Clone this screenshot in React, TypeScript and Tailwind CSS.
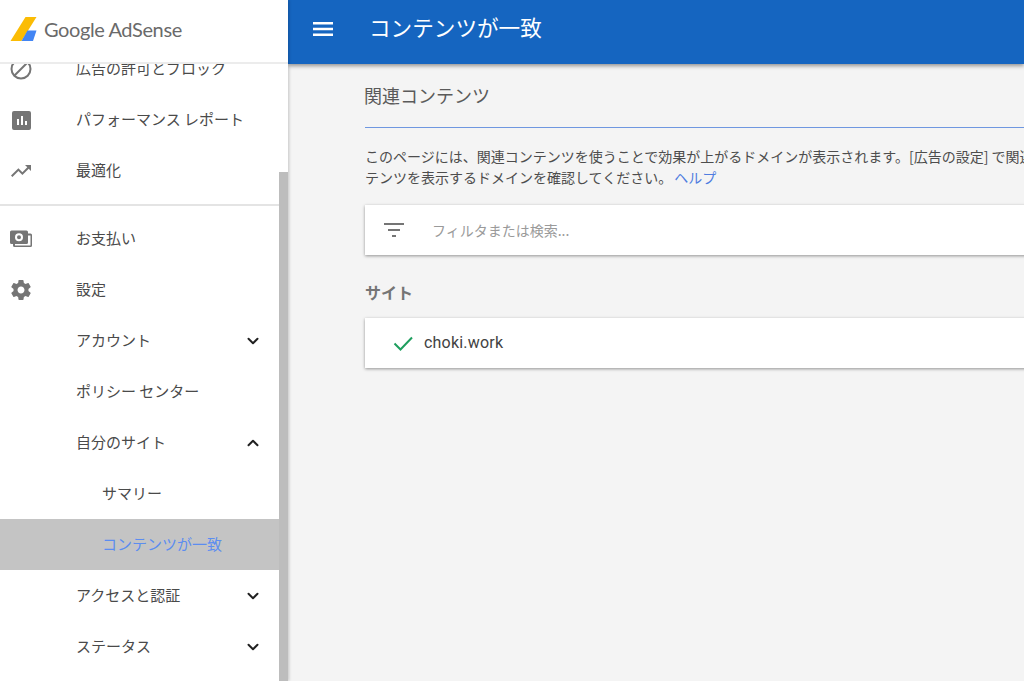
import { ChevronDown, ChevronUp } from 'lucide-react'
import type { ReactNode } from 'react'

const jp = { fontFamily: '"Noto Sans CJK JP", "Noto Sans", sans-serif' }

function AdSenseLogo() {
  return (
    <svg width="27" height="24" viewBox="0 0 27 24" className="shrink-0">
      <path d="M15.5 0H26.5L11.5 24H0.500Z" fill="#fbbc04" />
      <path d="M11.5 24L17.5 13.500H26.5L23 24Z" fill="#4285f4" />
    </svg>
  )
}

function BlockIcon() {
  return (
    <svg width="24" height="24" viewBox="0 0 24 24" fill="none" stroke="#757575" strokeWidth="2">
      <circle cx="12" cy="12" r="9.500" />
      <path d="M5.500 18.500L18.500 5.500" />
    </svg>
  )
}

function ChartIcon() {
  return (
    <svg width="24" height="24" viewBox="0 0 24 24" fill="#757575">
      <path d="M5 3h15a2 2 0 0 1 2 2v15a2 2 0 0 1-2 2H5a2 2 0 0 1-2-2V5a2 2 0 0 1 2-2zm3 14h2v-6H8zm4 0h2V8h-2zm4 0h2v-4h-2z" fillRule="evenodd" />
    </svg>
  )
}

function TrendIcon() {
  return (
    <svg width="24" height="24" viewBox="0 0 24 24" fill="#757575">
      <path d="M16 6l2.290 2.290-4.880 4.880-4-4L2 16.590 3.410 18l6-6 4 4 6.300-6.290L22 12V6z" />
    </svg>
  )
}

function MoneyIcon() {
  return (
    <svg width="24" height="24" viewBox="0 0 24 24" fill="#757575">
      <path d="M2.500 3.500h15a1.500 1.500 0 0 1 1.500 1.500v1.500h2.500A1.500 1.500 0 0 1 23 8v10.500a1.500 1.500 0 0 1-1.500 1.500h-16A1.500 1.500 0 0 1 4 18.500V17H2.500A1.500 1.500 0 0 1 1 15.500V5a1.500 1.500 0 0 1 1.500-1.500zM6 17v1.500h15.500V8.500H19v7a1.500 1.500 0 0 1-1.500 1.500zM10 6.200a4 4 0 1 0 0 8 4 4 0 0 0 0-8zm0 2a2 2 0 1 1 0 4 2 2 0 0 1 0-4z" fillRule="evenodd" />
    </svg>
  )
}

function GearIcon() {
  return (
    <svg width="24" height="24" viewBox="0 0 24 24" fill="#757575">
      <path d="M19.430 12.980c.040-.320.070-.640.070-.980s-.030-.660-.070-.980l2.110-1.650c.190-.150.240-.420.120-.640l-2-3.460c-.120-.220-.390-.300-.610-.220l-2.490 1c-.520-.400-1.080-.730-1.690-.980l-.380-2.650A.488.488 0 0 0 14 2h-4c-.250 0-.460.180-.490.420l-.380 2.650c-.610.250-1.170.590-1.690.980l-2.490-1c-.230-.090-.490 0-.610.220l-2 3.460c-.130.220-.070.490.120.640l2.110 1.650c-.040.320-.070.650-.070.980s.030.660.070.980l-2.110 1.650c-.190.150-.240.420-.120.640l2 3.460c.120.220.390.300.610.220l2.490-1c.520.400 1.080.730 1.690.980l.380 2.650c.030.240.240.420.490.420h4c.250 0 .460-.180.490-.420l.380-2.650c.610-.250 1.170-.590 1.690-.980l2.490 1c.230.090.490 0 .610-.220l2-3.460c.120-.220.070-.490-.120-.640l-2.110-1.650zM12 15.500c-1.930 0-3.500-1.570-3.500-3.500s1.570-3.500 3.500-3.500 3.500 1.570 3.500 3.500-1.570 3.500-3.500 3.500z" />
    </svg>
  )
}

interface NavRowProps {
  label: string
  icon?: ReactNode
  chevron?: 'up' | 'down'
  sub?: boolean
  active?: boolean
}

function NavRow({ label, icon, chevron, sub, active }: NavRowProps) {
  return (
    <div className={`flex h-[51px] shrink-0 items-center ${active ? 'bg-[#c4c4c4]' : ''}`}>
      <div className="flex w-[76px] shrink-0 items-center pl-[9px]">{icon}</div>
      <span className={`text-[15px] whitespace-nowrap ${sub ? 'pl-[26px]' : ''} ${active ? 'text-[#5c8df0]' : 'text-[#4a4a4a]'}`}>
        {label}
      </span>
      {chevron === 'down' && <ChevronDown size={18} strokeWidth={2.6} className="mr-[17px] ml-auto text-[#212121]" />}
      {chevron === 'up' && <ChevronUp size={18} strokeWidth={2.6} className="mr-[17px] ml-auto text-[#212121]" />}
    </div>
  )
}

function Sidebar() {
  return (
    <aside className="relative z-20 flex h-full w-[288px] shrink-0 flex-col overflow-hidden bg-white shadow-[1px_0_3px_rgba(0,0,0,0.2)]">
      {/* Logo */}
      <div className="relative z-10 flex h-[64px] shrink-0 items-center gap-[7px] border-b-2 border-[#ececec] bg-white pb-[5px] pl-[10px]">
        <AdSenseLogo />
        <span className="text-[20px] tracking-[-0.4px] whitespace-nowrap text-[#6a6a6a]" style={{ fontFamily: 'Lato, sans-serif' }}>
          Google AdSense
        </span>
      </div>

      <div className="flex min-h-0 flex-1">
        <nav className="-mt-[21px] flex w-[279px] shrink-0 flex-col">
          <NavRow label="広告の許可とブロック" icon={<BlockIcon />} />
          <NavRow label="パフォーマンス レポート" icon={<ChartIcon />} />
          <NavRow label="最適化" icon={<TrendIcon />} />
          <div className="mt-[8px] mb-[7px] h-[2px] w-[288px] shrink-0 bg-[#e4e4e4]" />
          <NavRow label="お支払い" icon={<MoneyIcon />} />
          <NavRow label="設定" icon={<GearIcon />} />
          <NavRow label="アカウント" chevron="down" />
          <NavRow label="ポリシー センター" />
          <NavRow label="自分のサイト" chevron="up" />
          <NavRow label="サマリー" sub />
          <NavRow label="コンテンツが一致" sub active />
          <NavRow label="アクセスと認証" chevron="down" />
          <NavRow label="ステータス" chevron="down" />
        </nav>
        {/* Scrollbar */}
        <div className="mt-[108px] w-[9px] shrink-0 bg-[#bdbdbd]" />
      </div>
    </aside>
  )
}

export default function App() {
  return (
    <div className="flex h-[681px] w-[1024px] overflow-hidden bg-[#f4f4f4]" style={jp}>
      <Sidebar />

      <div className="flex min-w-0 flex-1 flex-col">
        <header className="flex h-[64px] shrink-0 items-center bg-[#1565c0] pb-[6px] shadow-[0_2px_4px_rgba(0,0,0,0.4)]">
          <svg width="20" height="14" viewBox="0 0 20 14" fill="#ffffff" className="ml-[25px] shrink-0">
            <rect y="0" width="20" height="2.500" />
            <rect y="5.750" width="20" height="2.500" />
            <rect y="11.500" width="20" height="2.500" />
          </svg>
          <h1 className="-mt-[3px] ml-[36px] text-[21.6px] font-normal whitespace-nowrap text-white">コンテンツが一致</h1>
        </header>

        <main className="w-[800px] shrink-0 pt-[17px] pl-[77px]">
          <h2 className="-ml-[1px] h-[46px] text-[18px] leading-[28px] font-normal text-[#5a5a5a]">関連コンテンツ</h2>
          <div className="h-px bg-[#6f97e0]" />
          <p className="mt-[18px] text-[14px] leading-[21px] whitespace-nowrap text-[#4d4d4d]">
            このページには、関連コンテンツを使うことで効果が上がるドメインが表示されます。[広告の設定] で関連コン
            <br />
            テンツを表示するドメインを確認してください。 <a className="-ml-[1px] text-[#4f7de0]">ヘルプ</a>
          </p>

          <div className="mt-[17px] flex h-[50px] items-center bg-white shadow-[0_1px_3px_rgba(0,0,0,0.4)]">
            <svg width="24" height="24" viewBox="0 0 24 24" fill="#757575" className="ml-[17px]">
              <path d="M2 5h20v2H2zM6 11h12v2H6zM10 17h4v2h-4z" />
            </svg>
            <span className="ml-[26px] text-[14px] text-[#9a9a9a]">フィルタまたは検索...</span>
          </div>

          <h3 className="mt-[25px] text-[16px] leading-[24px] font-bold text-[#757575]">サイト</h3>

          <div className="mt-[14px] flex h-[50px] items-center bg-white shadow-[0_1px_3px_rgba(0,0,0,0.4)]">
            <svg width="24" height="24" viewBox="0 0 24 24" fill="none" stroke="#1e9e5e" strokeWidth="2" className="ml-[26px]">
              <path d="M3.500 12.500L9.500 18.500L21 6.500" />
            </svg>
            <span className="ml-[9px] text-[16px] tracking-[0.2px] text-[#424242]" style={{ fontFamily: 'Roboto, sans-serif' }}>
              choki.work
            </span>
          </div>
        </main>
      </div>
    </div>
  )
}
